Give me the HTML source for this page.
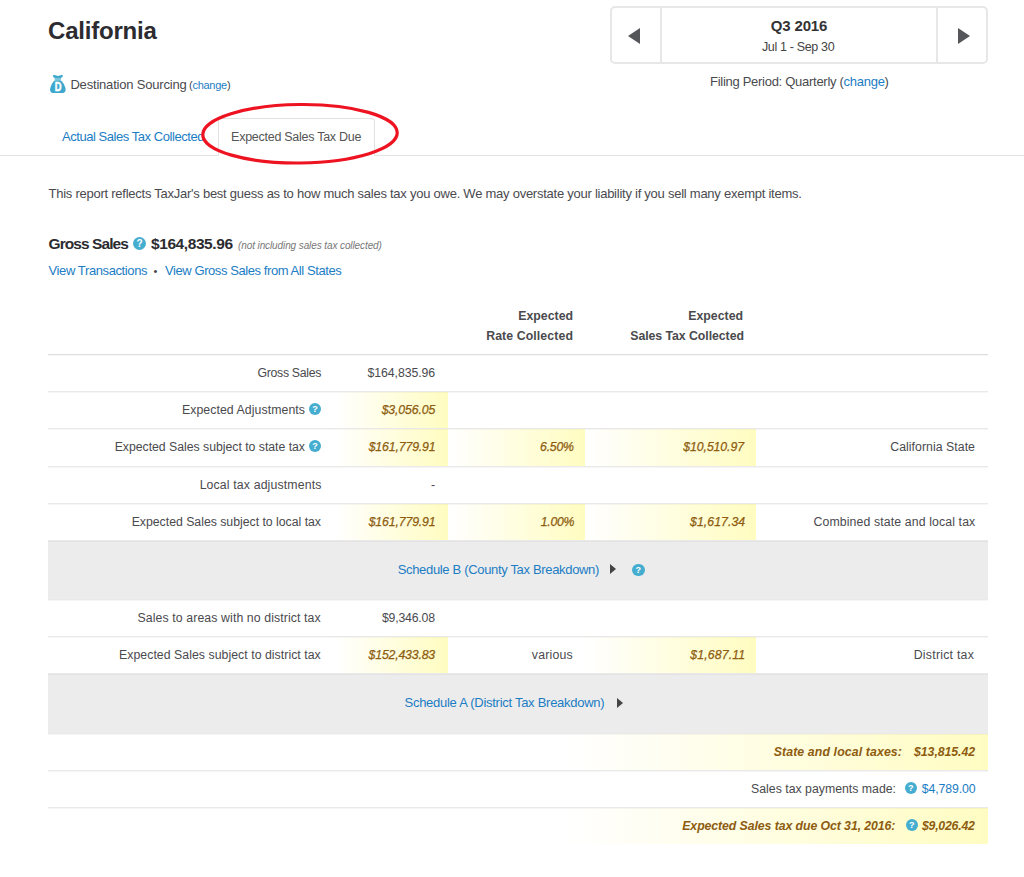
<!DOCTYPE html>
<html><head><meta charset="utf-8">
<title>California - Expected Sales Tax Due</title>
<style>
*{box-sizing:border-box}
html,body{margin:0;padding:0;background:#fff}
body{width:1024px;height:877px;position:relative;overflow:hidden;font-family:"Liberation Sans",sans-serif;font-size:13px;color:#4a4a4e}
a{color:#1b7dc4;text-decoration:none}
.abs{position:absolute;white-space:nowrap;line-height:16px}
.f{position:relative;display:inline-block}
h1{position:absolute;left:48px;top:16px;margin:0;font-size:24px;line-height:30px;font-weight:bold;color:#2b2b30;white-space:nowrap}
.period{position:absolute;left:610px;top:6px;width:378px;height:58px;border:2px solid #e7e7e7;border-radius:5px;background:#fff}
.period .l{position:absolute;left:0;top:0;width:50px;height:54px;border-right:2px solid #e7e7e7}
.period .r{position:absolute;right:0;top:0;width:50px;height:54px;border-left:2px solid #e7e7e7}
.period .pq{position:absolute;left:50px;right:50px;top:9px;text-align:center;font-weight:bold;font-size:15px;line-height:18px;color:#333}
.period .pd{position:absolute;left:50px;right:50px;top:31px;text-align:center;font-size:12.5px;line-height:16px;color:#444}
.tri-l{position:absolute;left:16px;top:19.5px;width:0;height:0;border-top:8.5px solid transparent;border-bottom:8.5px solid transparent;border-right:12.5px solid #55565a}
.tri-r{position:absolute;left:20px;top:19.5px;width:0;height:0;border-top:8.5px solid transparent;border-bottom:8.5px solid transparent;border-left:12.5px solid #55565a}
.tabline{position:absolute;left:0;top:155px;width:1024px;height:1px;background:#e2e2e2}
.tab-active{position:absolute;left:218px;top:118px;width:157px;height:38px;border:1px solid #e2e2e2;border-bottom:1px solid #fff;border-radius:4px 4px 0 0;background:#fff}
table{position:absolute;left:48px;top:300px;width:940px;border-collapse:collapse;font-size:12.3px}
td,th{height:37px;padding:0;border-top:1px solid #e9e9e9;box-shadow:inset 0 1px 0 rgba(0,0,0,0.035);vertical-align:middle;white-space:nowrap}
tr.first td{border-top-color:#dedede}
th{border-top:none;box-shadow:none;height:54px;font-weight:bold;color:#4a4a4e;text-align:right;line-height:19.5px;vertical-align:top;padding-top:7px}
td.lab{text-align:right;padding-right:14px}
td.num{text-align:right;padding-right:13px}
td.y{background:linear-gradient(to right,#fff 0%,#fffcc0 100%);color:#8d5c10;font-style:italic;-webkit-text-stroke:0.25px #8d5c10}
td.yw{background:linear-gradient(to right,#fff 55%,#fffcc2 100%);color:#8d5c10;font-style:italic;font-weight:bold}
tr.sched td{background:#ececec;height:60px;text-align:center;font-size:13px}
.qi{display:inline-block;position:relative;top:-2px;width:12px;height:12px;border-radius:50%;background:#45add0;color:#fff;font-size:9px;font-weight:bold;line-height:12px;text-align:center;font-style:normal;vertical-align:0px;letter-spacing:0;margin-left:4px}
.tri{display:inline-block;width:0;height:0;border-top:5px solid transparent;border-bottom:5px solid transparent;border-left:6px solid #444;vertical-align:0px}
</style></head><body>
<h1><span class="f" style="letter-spacing:-0.20px;left:0.0px">California</span></h1>
<div class="period"><div class="l"><div class="tri-l"></div></div><div class="pq"><span class="f" style="letter-spacing:-0.18px;left:0.0px">Q3 2016</span></div><div class="pd"><span class="f" style="letter-spacing:-0.34px;left:-0.9px">Jul 1 - Sep 30</span></div><div class="r"><div class="tri-r"></div></div></div>
<div class="abs" style="left:710px;top:74px"><span class="f" style="letter-spacing:-0.28px;left:0.0px">Filing Period: Quarterly (<a>change</a>)</span></div>
<svg class="abs" style="left:50px;top:75px" width="16" height="18.4" viewBox="0 0 16 18.4"><path d="M2.9 1.0 C2.6 0.2 3.4 -0.2 4.3 0.1 C6.8 1.2 9.0 1.2 11.5 0.1 C12.4 -0.2 13.2 0.2 12.9 1.0 C12.5 2.0 11.8 2.6 10.9 3.1 L4.7 3.1 C3.9 2.6 3.3 2.0 2.9 1.0 Z" fill="#3ea8cc"/><rect x="4.7" y="2.9" width="6.2" height="2.8" fill="#7cc6dd"/><path d="M4.7 5.5 L10.9 5.5 C13 7 15.2 11 15.6 14.2 C15.9 16.8 14 18.1 12 18.1 L3.8 18.1 C1.6 18.1 -0.2 16.8 0.1 14.2 C0.5 11 2.6 7 4.7 5.5 Z" fill="#3ea8cc"/><text transform="translate(8.15 15.9) scale(0.78 1)" text-anchor="middle" font-family="Liberation Sans, sans-serif" font-weight="bold" font-size="12" fill="#fff" stroke="#fff" stroke-width="0.5">D</text></svg>
<div class="abs" style="left:71px;top:77px"><span class="f" style="letter-spacing:-0.19px;left:-0.6px">Destination Sourcing</span></div>
<div class="abs" style="left:189px;top:77px;font-size:11px"><span class="f" style="letter-spacing:-0.26px;left:0.0px">(<a>change</a>)</span></div>
<div class="tabline"></div>
<div class="tab-active"></div>
<div class="abs" style="left:62px;top:129px"><span class="f" style="letter-spacing:-0.45px;left:0.0px"><a>Actual Sales Tax Collected</a></span></div>
<div class="abs" style="left:232px;top:129px;color:#555;font-size:12.5px"><span class="f" style="letter-spacing:-0.27px;left:-0.9px">Expected Sales Tax Due</span></div>
<svg class="abs" style="left:190px;top:95px" width="220" height="80"><ellipse cx="110" cy="38.75" rx="97.25" ry="29.25" fill="none" stroke="#ee1320" stroke-width="3.2" transform="rotate(-0.6 110 38.75)"/></svg>
<div class="abs" style="left:48px;top:186px"><span class="f" style="letter-spacing:-0.25px;left:0.5px">This report reflects TaxJar's best guess as to how much sales tax you owe. We may overstate your liability if you sell many exempt items.</span></div>
<div class="abs" style="left:48px;top:234px;font-size:15.5px;line-height:20px;font-weight:bold;color:#2b2b30"><span class="f" style="letter-spacing:-0.92px;left:0.5px">Gross Sales</span></div>
<span class="qi" style="position:absolute;left:133px;top:237px;margin:0;width:13px;height:13px;line-height:13px;font-size:10px">?</span>
<div class="abs" style="left:151px;top:234px;font-size:15.5px;line-height:20px;font-weight:bold;color:#2b2b30"><span class="f" style="letter-spacing:-0.42px;left:0.0px">$164,835.96</span></div>
<div class="abs" style="left:238px;top:237.5px;font-size:10px;font-style:italic;color:#777"><span class="f" style="letter-spacing:-0.10px;left:0.0px">(not including sales tax collected)</span></div>
<div class="abs" style="left:48px;top:263px"><span class="f" style="letter-spacing:-0.39px;left:0.5px"><a>View Transactions</a></span></div>
<div class="abs" style="left:153.5px;top:263px;font-size:11px;color:#444">•</div>
<div class="abs" style="left:165px;top:263px"><span class="f" style="letter-spacing:-0.42px;left:0.0px"><a>View Gross Sales from All States</a></span></div>
<table>
<colgroup><col style="width:287px"><col style="width:113px"><col style="width:137px"><col style="width:171px"><col style="width:232px"></colgroup>
<tr><th></th><th></th><th style="padding-right:12px"><span class="f" style="letter-spacing:0.00px;left:0.0px">Expected</span><br><span class="f" style="letter-spacing:0.10px;left:0.0px">Rate Collected</span></th><th style="padding-right:13px"><span class="f" style="letter-spacing:0.00px;left:0.0px">Expected</span><br><span class="f" style="letter-spacing:-0.05px;left:0.9px">Sales Tax Collected</span></th><th></th></tr>
<tr class="first"><td class="lab"><span class="f" style="letter-spacing:-0.32px;left:0.0px">Gross Sales</span></td><td class="num"><span class="f" style="letter-spacing:-0.09px;left:0.0px">$164,835.96</span></td><td></td><td></td><td></td></tr>
<tr><td class="lab"><span class="f" style="letter-spacing:0.07px;left:0.0px">Expected Adjustments</span><span class="qi">?</span></td><td class="num y"><span class="f" style="letter-spacing:-0.13px;left:0.2px">$3,056.05</span></td><td></td><td></td><td></td></tr>
<tr style="height:38px"><td class="lab"><span class="f" style="letter-spacing:-0.03px;left:0.0px">Expected Sales subject to state tax</span><span class="qi">?</span></td><td class="num y"><span class="f" style="letter-spacing:-0.14px;left:0.5px">$161,779.91</span></td><td class="num y"><span class="f" style="letter-spacing:-0.23px;left:1.8px">6.50%</span></td><td class="num y"><span class="f" style="letter-spacing:-0.10px;left:0.9px">$10,510.97</span></td><td class="num"><span class="f" style="letter-spacing:0.04px;left:0.0px">California State</span></td></tr>
<tr><td class="lab"><span class="f" style="letter-spacing:0.14px;left:0.5px">Local tax adjustments</span></td><td class="num">-</td><td></td><td></td><td></td></tr>
<tr><td class="lab"><span class="f" style="letter-spacing:-0.02px;left:0.0px">Expected Sales subject to local tax</span></td><td class="num y"><span class="f" style="letter-spacing:-0.14px;left:0.5px">$161,779.91</span></td><td class="num y"><span class="f" style="letter-spacing:-0.28px;left:2.2px">1.00%</span></td><td class="num y"><span class="f" style="letter-spacing:0.05px;left:2.2px">$1,617.34</span></td><td class="num"><span class="f" style="letter-spacing:0.12px;left:0.4px">Combined state and local tax</span></td></tr>
<tr class="sched"><td colspan="5" style="height:59px"><div style="position:relative;height:58px"><span class="abs" style="left:351px;top:21px"><span class="f" style="letter-spacing:-0.33px;left:-1.3px"><a>Schedule B (County Tax Breakdown)</a></span></span><span class="tri" style="position:absolute;left:562px;top:23.5px"></span><span class="qi" style="position:absolute;left:584px;top:23.3px;margin:0;width:12.5px;height:12.5px;line-height:12.5px">?</span></div></td></tr>
<tr><td class="lab"><span class="f" style="letter-spacing:0.10px;left:-0.2px">Sales to areas with no district tax</span></td><td class="num"><span class="f" style="letter-spacing:-0.20px;left:-0.2px">$9,346.08</span></td><td></td><td></td><td></td></tr>
<tr><td class="lab"><span class="f" style="letter-spacing:0.04px;left:-0.2px">Expected Sales subject to district tax</span></td><td class="num y"><span class="f" style="letter-spacing:-0.18px;left:0.0px">$152,433.83</span></td><td class="num" style="text-align:center"><span class="f" style="letter-spacing:0.18px;left:42.3px">various</span></td><td class="num y"><span class="f" style="letter-spacing:0.14px;left:2.3px">$1,687.11</span></td><td class="num"><span class="f" style="letter-spacing:0.25px;left:-0.9px">District tax</span></td></tr>
<tr class="sched"><td colspan="5"><div style="position:relative;height:59px"><span class="abs" style="left:357px;top:21.6px"><span class="f" style="letter-spacing:-0.27px;left:-0.5px"><a>Schedule A (District Tax Breakdown)</a></span></span><span class="tri" style="position:absolute;left:568.5px;top:24px"></span></div></td></tr>
<tr><td colspan="5" class="num yw"><span class="f" style="letter-spacing:0.12px;left:0.0px">State and local taxes:</span><span style="display:inline-block;width:12px"></span><span class="f" style="letter-spacing:-0.06px;left:0.0px">$13,815.42</span></td></tr>
<tr><td colspan="5" class="num"><span class="f" style="letter-spacing:0.00px;left:1.8px">Sales tax payments made:</span><span class="qi" style="margin-left:10.5px;margin-right:4.5px">?</span><span class="f" style="letter-spacing:-0.10px;left:0.5px"><a>$4,789.00</a></span></td></tr>
<tr><td colspan="5" class="num yw"><span class="f" style="letter-spacing:-0.08px;left:0.0px">Expected Sales tax due Oct 31, 2016:</span><span class="qi" style="margin-left:10.5px;margin-right:4.5px">?</span><span class="f" style="letter-spacing:-0.23px;left:-0.4px">$9,026.42</span></td></tr>
</table>
</body></html>
